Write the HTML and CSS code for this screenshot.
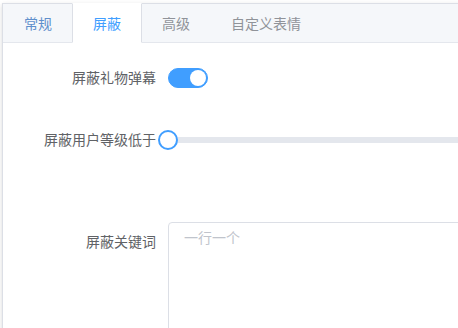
FILE: index.html
```html
<!DOCTYPE html>
<html lang="zh">
<head>
<meta charset="utf-8">
<link rel="stylesheet" href="styles.css">
</head>
<body>
<div class="card">
  <div class="tabs-header">
    <div class="tab tab-hover">常规</div>
    <div class="tab tab-active">屏蔽</div>
    <div class="tab">高级</div>
    <div class="tab">自定义表情</div>
  </div>
  <div class="tabs-content">
    <div class="form-item">
      <label class="form-label">屏蔽礼物弹幕</label>
      <div class="form-content">
        <span class="switch"><span class="switch-core"><span class="switch-knob"></span></span></span>
      </div>
    </div>
    <div class="form-item form-item-slider">
      <label class="form-label">屏蔽用户等级低于</label>
      <div class="form-content">
        <div class="slider">
          <div class="slider-runway">
            <div class="slider-button"></div>
          </div>
        </div>
      </div>
    </div>
    <div class="form-item">
      <label class="form-label">屏蔽关键词</label>
      <div class="form-content">
        <textarea class="textarea" placeholder="一行一个"></textarea>
      </div>
    </div>
  </div>
</div>
</body>
</html>
```
FILE: styles.css
```css
html, body {
  margin: 0;
  padding: 0;
  background: #fff;
  overflow: hidden;
}
body {
  padding: 3px 0 0 2px;
  font-family: "Helvetica Neue", Helvetica, "Noto Sans CJK SC", "Microsoft YaHei", sans-serif;
  font-size: 14px;
}
.card {
  width: 720px;
  border: 1px solid #dcdfe6;
  background: #fff;
  box-shadow: 0 2px 4px 0 rgba(0,0,0,.12), 0 0 6px 0 rgba(0,0,0,.04);
}
.tabs-header {
  display: flex;
  height: 38px;
  background: #f5f7fa;
  border-bottom: 1px solid #e4e7ed;
}
.tab {
  box-sizing: border-box;
  height: 40px;
  line-height: 40px;
  margin-top: -1px;
  padding: 0 20px;
  border: 1px solid transparent;
  color: #909399;
  font-size: 14px;
  font-weight: 400;
}
.tab + .tab {
  margin-left: -1px;
}
.tab-hover {
  color: #5f8fcc;
}
.tab-active {
  color: #409eff;
  background: #fff;
  border-left-color: #dcdfe6;
  border-right-color: #dcdfe6;
  border-bottom-color: #fff;
  position: relative;
  z-index: 1;
}
.tabs-content {
  padding: 15px;
}
.form-item {
  display: flex;
  margin-bottom: 22px;
}
.form-item-slider {
  margin-bottom: 62px;
}
.form-label {
  box-sizing: border-box;
  width: 150px;
  flex: none;
  text-align: right;
  padding-right: 12px;
  line-height: 40px;
  color: #606266;
  font-size: 14px;
}
.form-content {
  flex: 1;
  line-height: 40px;
  min-height: 40px;
  display: flex;
  align-items: center;
}
.switch {
  display: inline-flex;
  align-items: center;
  height: 20px;
}
.switch-core {
  position: relative;
  box-sizing: border-box;
  width: 40px;
  height: 20px;
  border-radius: 10px;
  background: #409eff;
  border: 1px solid #409eff;
}
.switch-knob {
  position: absolute;
  top: 1px;
  left: 21px;
  width: 16px;
  height: 16px;
  border-radius: 50%;
  background: #fff;
}
.slider {
  width: 100%;
  height: 38px;
  display: flex;
  align-items: center;
}
.slider-runway {
  position: relative;
  width: 100%;
  height: 6px;
  border-radius: 3px;
  background: #e4e7ed;
}
.slider-button {
  position: absolute;
  left: -10px;
  top: -7px;
  box-sizing: border-box;
  width: 20px;
  height: 20px;
  border: 2px solid #409eff;
  border-radius: 50%;
  background: #fff;
}
.textarea {
  display: block;
  box-sizing: border-box;
  width: 100%;
  height: 200px;
  margin: 0;
  padding: 5px 15px;
  border: 1px solid #dcdfe6;
  border-radius: 4px;
  font-family: inherit;
  font-size: 14px;
  line-height: 1.5;
  color: #606266;
  resize: vertical;
  outline: none;
}
.textarea::placeholder {
  color: #c0c4cc;
}
```
